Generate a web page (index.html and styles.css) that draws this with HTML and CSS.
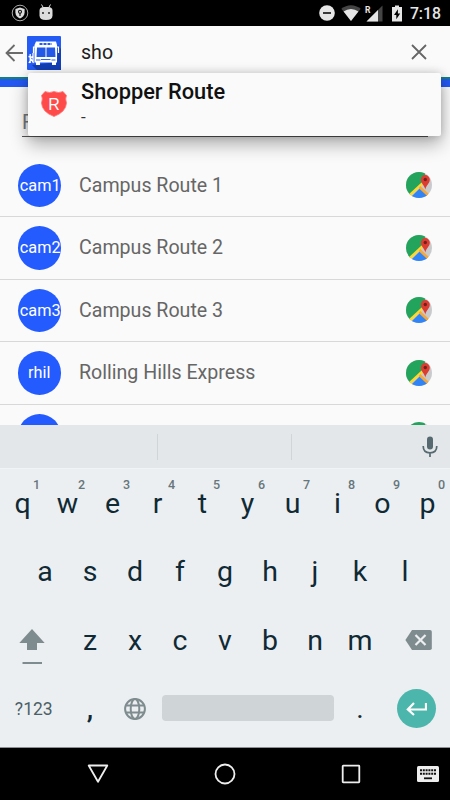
FILE: index.html
```html
<!DOCTYPE html>
<html lang="en">
<head>
<meta charset="UTF-8">
<meta name="viewport" content="width=device-width, initial-scale=1.0">
<title>Routes</title>
<link rel="stylesheet" href="styles.css">
</head>
<body>

<svg class="defs" width="0" height="0">
  <defs>
    <clipPath id="disc"><circle cx="13" cy="13" r="13"/></clipPath>
    <symbol id="map" viewBox="0 0 26 26">
      <g clip-path="url(#disc)">
        <rect width="26" height="26" fill="#c9cacc"/>
        <path d="M0 0h20l-4 12L4 24H0z" fill="#23a45c"/>
        <path d="M14 16L27 28H2z" fill="#3184f5"/>
        <path d="M3 24L17 11" stroke="#fdd835" stroke-width="2.8"/>
        <path d="M13.500 15L22 23" stroke="#f7a83a" stroke-width="2.6"/>
      </g>
      <path d="M19.300 17.500C18.600 13.500 14.800 11.600 14.800 7.600a4.500 4.500 0 0 1 9 0c0 4-3.800 5.900-4.500 9.900z" fill="#dd3c31"/>
      <circle cx="19.300" cy="7.500" r="1.700" fill="#6f211d"/>
    </symbol>
  </defs>
</svg>

<div class="screen">
  <div class="status-bar">
    <svg class="status-shield" width="18" height="18" viewBox="0 0 18 18">
      <circle cx="9" cy="9" r="7.800" fill="none" stroke="#aaa" stroke-width="1"/>
      <path d="M9 3.500l4.600 1.500v3.500c0 3-2 5-4.600 6-2.600-1-4.600-3-4.600-6V5z" fill="#ddd"/>
      <circle cx="9" cy="7.800" r="1.500" fill="none" stroke="#111" stroke-width="1.100"/>
      <path d="M9 9v3" stroke="#111" stroke-width="1.200"/>
    </svg>
    <svg class="status-droid" width="14" height="17" viewBox="0 0 14 17">
      <path d="M2.500.5L4.500 4M11.500.5L9.500 4" stroke="#ddd"/>
      <path d="M.5 6.500Q.5 3 5 3h4q4.500 0 4.500 3.500v5q0 4.500-6.500 4.500T.5 11.500z" fill="#ddd"/>
      <circle cx="4" cy="9" r=".9" fill="#111"/><circle cx="10" cy="9" r=".9" fill="#111"/>
    </svg>
    <span class="spacer"></span>
    <svg class="status-dnd" width="16" height="16" viewBox="0 0 16 16">
      <circle cx="8" cy="8" r="7.800" fill="#e6e6e6"/>
      <path d="M4 8h8" stroke="#000" stroke-width="1.500"/>
    </svg>
    <svg class="status-wifi" width="20" height="16" viewBox="0 0 20 16">
      <path d="M10 16L.3 3.800Q4.800.2 10 .2t9.700 3.600z" fill="#444"/>
      <path d="M10 16L2.600 6.500Q6 4 10 4t7.400 2.500z" fill="#e6e6e6"/>
    </svg>
    <svg class="status-cell" width="18" height="17" viewBox="0 0 18 17">
      <path d="M17.500.5V16.500H1.500z" fill="#444"/>
      <path d="M13 5v11.500H1.500z" fill="#e6e6e6"/>
      <text x="0" y="7.500" class="roaming">R</text>
    </svg>
    <svg class="status-battery" width="10" height="17" viewBox="0 0 10 17">
      <path d="M3 .5h4v1.500h3V16.500H0V2h3z" fill="#e6e6e6"/>
      <path d="M5.900 4.200L2 10h2.300v4.200L8.200 8.500H5.900z" fill="#000"/>
    </svg>
    <span class="clock">7:18</span>
  </div>

  <div class="app">
    <div class="search-bar">
      <svg class="back" width="18" height="18" viewBox="0 0 18 18">
        <path d="M18 9H1.500M9.500 1L1.500 9l8 8" fill="none" stroke="#6b6b6b" stroke-width="1.800"/>
      </svg>
      <svg class="logo" width="34" height="34" viewBox="0 0 34 34">
        <rect width="34" height="34" rx="1" fill="#245bf5"/>
        <path d="M31 9l3 4v21H10l-5-5 25-3z" fill="#143fb4"/>
        <path d="M9 5.500h20l1 3.500v17.500H7.500V9z" fill="#fff"/>
        <path d="M12.500 8h12.500" stroke="#245bf5" stroke-width="2" stroke-dasharray="3 1"/>
        <path d="M10 11.500h8.500v9.500H9.500zM19.500 11.500h8.500l.5 9.500h-9z" fill="#2459e8"/>
        <path d="M9 24h4.500M24.500 24h4M14 23.500h9.500" stroke="#3465e6" stroke-width="1.200"/>
        <path d="M9 26h4v3H9zM25 26h4v3h-4z" fill="#fff"/>
        <path d="M8 11H6.500v6M29.500 11H31.500v6" fill="none" stroke="#fff" stroke-width="1.200"/>
        <path d="M3.200 18v9M6 17v9M1.500 20.500l5 1M2 27l2-4 2.500 4" fill="none" stroke="#fff" stroke-width="1.300"/>
      </svg>
      <span class="query">sho</span>
      <svg class="clear" width="16" height="16" viewBox="0 0 16 16">
        <path d="M1 1l14 14M15 1L1 15" stroke="#666" stroke-width="1.800"/>
      </svg>
    </div>
    <div class="toolbar-edge"></div>

    <div class="filter">
      <div class="filter-input">F</div>
    </div>

    <div class="routes">
      <div class="route">
        <span class="badge"><span class="code">cam1</span></span>
        <span class="name">Campus Route 1</span>
        <svg class="map-icon"><use href="#map"/></svg>
      </div>
      <div class="route">
        <span class="badge"><span class="code">cam2</span></span>
        <span class="name">Campus Route 2</span>
        <svg class="map-icon"><use href="#map"/></svg>
      </div>
      <div class="route">
        <span class="badge"><span class="code">cam3</span></span>
        <span class="name">Campus Route 3</span>
        <svg class="map-icon"><use href="#map"/></svg>
      </div>
      <div class="route">
        <span class="badge">rhil</span>
        <span class="name">Rolling Hills Express</span>
        <svg class="map-icon"><use href="#map"/></svg>
      </div>
      <div class="route">
        <span class="badge"></span>
        <span class="name"></span>
        <svg class="map-icon"><use href="#map"/></svg>
      </div>
    </div>

    <div class="suggestion">
      <svg class="shield" width="28" height="28" viewBox="0 0 28 28">
        <path d="M5 1.500Q9.500 3.500 14 1.500q4.500 2 9 0l3.500 4q-1.500 3 0 7.500Q26 22 14 26.500 2 22 1.500 13q1.500-4.500 0-7.500z" fill="#ff4a4a" stroke="#f77" stroke-width=".8"/>
        <text x="14" y="19.500" text-anchor="middle" class="shield-letter">R</text>
      </svg>
      <div class="suggestion-text">
        <div class="suggestion-title">Shopper Route</div>
        <div class="suggestion-sub">-</div>
      </div>
    </div>
  </div>

  <div class="keyboard">
    <div class="strip">
      <span></span>
      <span class="middle"></span>
      <span class="mic">
        <svg width="16" height="22" viewBox="0 0 16 22">
          <rect x="5" y="0.500" width="6" height="13" rx="3" fill="#566970"/>
          <path d="M1.200 10q0 6.800 6.800 6.800t6.800-6.800M8 16.500V21" fill="none" stroke="#566970" stroke-width="1.700"/>
        </svg>
      </span>
    </div>
    <div class="keys">
      <span class="key">q<sup>1</sup></span>
      <span class="key">w<sup>2</sup></span>
      <span class="key">e<sup>3</sup></span>
      <span class="key">r<sup>4</sup></span>
      <span class="key">t<sup>5</sup></span>
      <span class="key">y<sup>6</sup></span>
      <span class="key">u<sup>7</sup></span>
      <span class="key">i<sup>8</sup></span>
      <span class="key">o<sup>9</sup></span>
      <span class="key">p<sup>0</sup></span>
    </div>
    <div class="keys indent">
      <span class="key">a</span>
      <span class="key">s</span>
      <span class="key">d</span>
      <span class="key">f</span>
      <span class="key">g</span>
      <span class="key">h</span>
      <span class="key">j</span>
      <span class="key">k</span>
      <span class="key">l</span>
    </div>
    <div class="keys">
      <span class="key side shift">
        <svg width="26" height="36" viewBox="0 0 26 36">
          <path d="M13 0l12.700 14H18v7H8v-7H.3z" fill="#7f8c8f"/>
          <path d="M3.500 34h19.500" stroke="#7f8c8f" stroke-width="2"/>
        </svg>
      </span>
      <span class="key">z</span>
      <span class="key">x</span>
      <span class="key">c</span>
      <span class="key">v</span>
      <span class="key">b</span>
      <span class="key">n</span>
      <span class="key">m</span>
      <span class="key side backspace">
        <svg width="27" height="20" viewBox="0 0 27 20">
          <path d="M7 0h18q1.800 0 1.800 1.800v16.400q0 1.800-1.800 1.800H7L.4 10z" fill="#7f8c8f"/>
          <path d="M10.500 5l10 10M20.500 5l-10 10" stroke="#eceff1" stroke-width="2.200"/>
        </svg>
      </span>
    </div>
    <div class="keys">
      <span class="key side symbols">?123</span>
      <span class="key comma">,</span>
      <span class="key">
        <svg width="22" height="22" viewBox="0 0 22 22" fill="none" stroke="#7f8c8f" stroke-width="2">
          <circle cx="11" cy="11" r="9.900"/>
          <ellipse cx="11" cy="11" rx="4.300" ry="9.900"/>
          <path d="M2 7.500h18M2 14.500h18"/>
        </svg>
      </span>
      <span class="space"></span>
      <span class="key">.</span>
      <span class="key side">
        <span class="enter">
          <svg width="21" height="14" viewBox="0 0 21 14">
            <path d="M20 1v6.500H2M8 1L1.800 7.400 8 13" fill="none" stroke="#fff" stroke-width="2.200"/>
          </svg>
        </span>
      </span>
    </div>
  </div>

  <div class="nav-bar">
    <svg class="nav-back" width="22" height="20" viewBox="0 0 22 20">
      <path d="M1.700 1.500h18.600L11 17.800z" fill="none" stroke="#eee" stroke-width="1.800" stroke-linejoin="round"/>
    </svg>
    <svg width="22" height="22" viewBox="0 0 22 22">
      <circle cx="11" cy="11" r="9.500" fill="none" stroke="#eee" stroke-width="1.800"/>
    </svg>
    <svg width="20" height="20" viewBox="0 0 20 20">
      <rect x="1.700" y="1.700" width="16.600" height="16.600" rx=".5" fill="none" stroke="#eee" stroke-width="1.800"/>
    </svg>
    <svg class="nav-ime" width="22" height="16" viewBox="0 0 22 16">
      <rect width="22" height="16" rx="1.500" fill="#eee"/>
      <path d="M3 4.200h16M3 7.800h16" stroke="#111" stroke-width="2" stroke-dasharray="2 .8"/>
      <path d="M7 12.300h8" stroke="#111" stroke-width="1.800"/>
    </svg>
  </div>
</div>

</body>
</html>
```

FILE: styles.css
```css
* {
  box-sizing: border-box;
}
body {
  margin: 0;
  font-family: Roboto, sans-serif;
  background-color: #000;
}
svg {
  display: block;
  flex: none;
}
.defs {
  position: absolute;
}
.screen {
  width: 450px;
  height: 800px;
  display: flex;
  flex-direction: column;
  overflow: hidden;
}

/* status bar */
.status-bar {
  height: 26px;
  flex: none;
  display: flex;
  align-items: center;
  padding: 0 9px 0 11px;
  background-color: #000;
}
.status-droid {
  margin: -2px 0 0 10px;
}
.spacer {
  flex: 1;
}
.status-wifi {
  margin-left: 6px;
}
.status-cell {
  margin-left: 4px;
}
.status-battery {
  margin-left: 9px;
}
.roaming {
  font-size: 8.5px;
  font-weight: 700;
  fill: #e6e6e6;
}
.clock {
  margin: 2px 0 0 8px;
  color: #e6e6e6;
  font-size: 15.8px;
  font-weight: 500;
  line-height: 20px;
}

/* search and routes */
.app {
  position: relative;
  height: 399px;
  flex: none;
  overflow: hidden;
  background-color: #fafafa;
}
.search-bar {
  height: 51px;
  display: flex;
  align-items: center;
  padding: 0 23px 0 5px;
}
.logo {
  margin: 2px 0 0 4px;
}
.search-bar .back {
  margin-top: 2px;
}
.query {
  flex: 1;
  margin: 2px 0 0 20px;
  font-size: 19.6px;
  color: #212121;
}
.toolbar-edge {
  height: 10px;
  background-color: #2458f2;
  border-top: 2px solid #128277;
}
.filter {
  height: 67.5px;
  padding: 20px 22px 0;
}
.filter-input {
  height: 30px;
  border-bottom: 1px solid #555;
  font-size: 20px;
  line-height: 30px;
  color: #777;
}
.route {
  height: 62.5px;
  display: flex;
  align-items: center;
  padding: 0 18px 0 17.5px;
  border-bottom: 1px solid #d8d8d8;
}
.badge {
  width: 43.5px;
  height: 43.5px;
  flex: none;
  display: flex;
  align-items: center;
  justify-content: center;
  border-radius: 50%;
  background-color: #245bff;
  color: #fff;
  font-size: 16.3px;
}
.code {
  margin-left: 2px;
}
.name {
  flex: 1;
  margin-left: 18px;
  font-size: 19.6px;
  color: #666;
}
.map-icon {
  width: 26px;
  height: 26px;
}
.suggestion {
  position: absolute;
  left: 28px;
  top: 47px;
  width: 413px;
  height: 63px;
  display: flex;
  padding-left: 12px;
  border-radius: 2px;
  background-color: #fafafa;
  box-shadow: 0 8px 18px rgba(0, 0, 0, 0.32), 0 0 8px rgba(0, 0, 0, 0.16);
}
.shield {
  margin-top: 17px;
}
.shield-letter {
  font-family: "Liberation Sans", sans-serif;
  font-size: 16px;
  fill: #fff;
}
.suggestion-text {
  margin-left: 13px;
}
.suggestion-title {
  margin-top: 5px;
  font-size: 21.8px;
  font-weight: 500;
  line-height: 27px;
  color: #111;
}
.suggestion-sub {
  font-size: 17px;
  line-height: 24px;
  color: #333;
}

/* keyboard */
.keyboard {
  height: 322px;
  flex: none;
  background-color: #eceff1;
}
.strip {
  height: 43.5px;
  display: grid;
  grid-template-columns: 157px 135px 1fr;
  padding: 9px 0 8px;
  background-color: #e3e7e9;
  border-bottom: 1px solid #f1f3f4;
}
.middle {
  border: 1px solid #d0d5d7;
  border-width: 0 1px;
}
.mic {
  display: flex;
  align-items: center;
  justify-content: flex-end;
  padding-right: 12px;
}
.keys {
  height: 68.5px;
  display: flex;
}
.indent {
  padding: 0 22.5px;
}
.key {
  position: relative;
  width: 45px;
  display: flex;
  align-items: center;
  justify-content: center;
  font-size: 28.5px;
  padding-top: 1px;
  color: #102a35;
}
.key sup {
  position: absolute;
  top: 9px;
  left: 33px;
  font-size: 12.5px;
  font-weight: 500;
  line-height: 14px;
  color: #66767c;
}
.side {
  width: 67.5px;
}
.shift {
  padding: 14px 4px 0 0;
}
.backspace {
  padding-left: 4px;
}
.symbols {
  font-size: 17.5px;
  color: #4b5f67;
}
.comma {
  font-weight: 500;
}
.space {
  width: 172px;
  height: 26px;
  margin: 0 4px;
  align-self: center;
  border-radius: 4px;
  background-color: #cfd4d6;
}
.enter {
  width: 39px;
  height: 39px;
  display: flex;
  align-items: center;
  justify-content: center;
  border-radius: 50%;
  background-color: #4db6ac;
}

/* navigation bar */
.nav-bar {
  flex: 1;
  display: grid;
  grid-template-columns: 126.5px 126.5px 126.5px 1fr;
  align-items: center;
  justify-items: center;
  padding: 0 8px 0 35px;
  background-color: #000;
  border-top: 1px solid #8d9092;
}
```
